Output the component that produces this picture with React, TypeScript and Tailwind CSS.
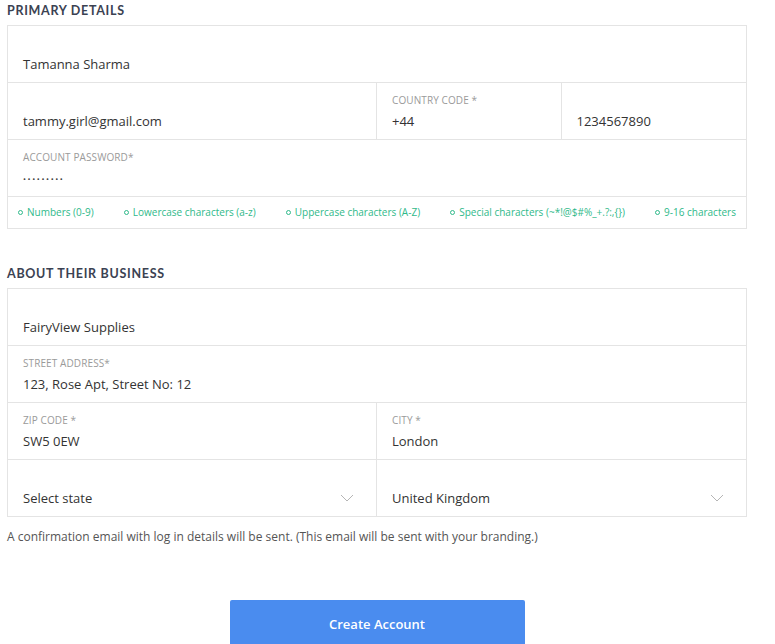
import React from "react";

const Label = ({ children }: { children?: React.ReactNode }) => (
  <div className="h-[14px] text-[10px] leading-[14px] uppercase text-[#9a9a9a] tracking-[0.1px]">
    {children}
  </div>
);

const Field = ({
  label,
  value,
  className = "",
  chevron = false,
}: {
  label?: string;
  value: React.ReactNode;
  className?: string;
  chevron?: boolean;
}) => (
  <div className={`h-[56px] pt-[10px] px-[15px] ${className}`}>
    <Label>{label}</Label>
    <div className="mt-[4px] flex items-center justify-between h-[20px] text-[13px] leading-[20px] text-[#333]">
      <span>{value}</span>
      {chevron && (
        <svg width="14" height="8" viewBox="0 0 14 8" className="mr-[7px]" fill="none">
          <path d="M1 1 L7 7 L13 1" stroke="#b5b5b5" strokeWidth="1" />
        </svg>
      )}
    </div>
  </div>
);

const Rule = ({ text }: { text: string }) => (
  <div className="flex items-center gap-[4px]">
    <span className="inline-block w-[5px] h-[5px] rounded-full border-[1.3px] border-[#2fb98a]" />
    <span>{text}</span>
  </div>
);

const Heading = ({ children }: { children: React.ReactNode }) => (
  <div
    className="h-[20px] pt-[1px] leading-[20px] text-[12.5px] font-bold uppercase tracking-[0.7px] text-[#3b4252]"
    style={{ fontFamily: "Lato, 'Open Sans', sans-serif" }}
  >
    {children}
  </div>
);

export default function App() {
  return (
    <div
      className="w-[775px] h-[644px] overflow-hidden bg-white"
      style={{ fontFamily: "'Open Sans', 'Noto Sans', sans-serif" }}
    >
      <div className="ml-[7px] w-[740px]">
        <Heading>Primary Details</Heading>
        <div className="mt-[5px] border border-[#e4e4e4]">
          <div className="border-b border-[#e4e4e4]">
            <Field value="Tamanna Sharma" />
          </div>
          <div className="grid grid-cols-4 border-b border-[#e4e4e4]">
            <Field className="col-span-2 border-r border-[#e4e4e4]" value="tammy.girl@gmail.com" />
            <Field className="border-r border-[#e4e4e4]" label="Country code *" value="+44" />
            <Field value="1234567890" />
          </div>
          <div className="border-b border-[#e4e4e4]">
            <Field
              label="Account Password*"
              value={<span className="text-[8px] tracking-[1.6px] text-[#444]">•••••••••</span>}
            />
          </div>
          <div className="h-[31px] flex items-center justify-between px-[10px] text-[10px] text-[#2fb98a]">
            <Rule text="Numbers (0-9)" />
            <Rule text="Lowercase characters (a-z)" />
            <Rule text="Uppercase characters (A-Z)" />
            <Rule text="Special characters (~*!@$#%_+.?:,{})" />
            <Rule text="9-16 characters" />
          </div>
        </div>

        <div className="mt-[34px]">
          <Heading>About Their Business</Heading>
        </div>
        <div className="mt-[5px] border border-[#e4e4e4]">
          <div className="border-b border-[#e4e4e4]">
            <Field value="FairyView Supplies" />
          </div>
          <div className="border-b border-[#e4e4e4]">
            <Field label="Street Address*" value="123, Rose Apt, Street No: 12" />
          </div>
          <div className="grid grid-cols-2 border-b border-[#e4e4e4]">
            <Field className="border-r border-[#e4e4e4]" label="Zip code *" value="SW5 0EW" />
            <Field label="City *" value="London" />
          </div>
          <div className="grid grid-cols-2">
            <Field className="border-r border-[#e4e4e4]" value="Select state" chevron />
            <Field value="United Kingdom" chevron />
          </div>
        </div>

        <p className="mt-[11px] text-[12px] leading-[18px] text-[#555]">
          A confirmation email with log in details will be sent. (This email will be sent with your branding.)
        </p>

        <div className="mt-[54px] flex justify-center">
          <button className="w-[295px] h-[50px] rounded-[2px] bg-[#4a8cef] text-white text-[13px] font-semibold">
            Create Account
          </button>
        </div>
      </div>
    </div>
  );
}
